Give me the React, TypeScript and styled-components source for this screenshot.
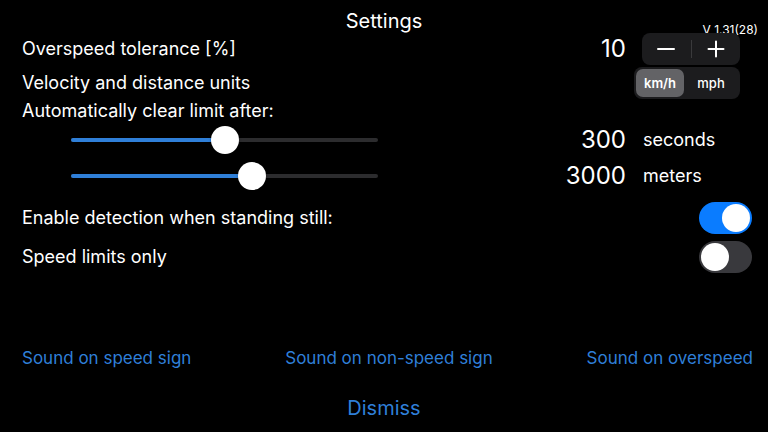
import React, { useState } from 'react';
import styled, { createGlobalStyle } from 'styled-components';

const GlobalStyle = createGlobalStyle`
  html, body {
    margin: 0;
    padding: 0;
    background: #000;
  }
  body {
    font-family: Inter, "Noto Sans", "Liberation Sans", sans-serif;
    color: #fff;
  }
`;

const BLUE = '#2f7fd8';
const SWITCH_BLUE = '#0a7cff';

function App() {
  const [tolerance, setTolerance] = useState(10);
  const [unit, setUnit] = useState('km/h');
  const [standing, setStanding] = useState(true);
  const [limitsOnly, setLimitsOnly] = useState(false);
  const seconds = 300;
  const meters = 3000;

  return (
    <>
      <GlobalStyle />
      <Screen>
        <Header>
          <span />
          <Title>Settings</Title>
          <Version>V 1.31(28)</Version>
        </Header>

        <Row $height={34}>
          <Label>Overspeed tolerance [%]</Label>
          <Controls>
            <BigValue>{tolerance}</BigValue>
            <Stepper>
              <StepButton onClick={() => setTolerance(tolerance - 1)}>
                <svg width="18" height="18" viewBox="0 0 18 18">
                  <path d="M1 9h16" stroke="#fff" strokeWidth="2" strokeLinecap="round" />
                </svg>
              </StepButton>
              <StepDivider />
              <StepButton onClick={() => setTolerance(tolerance + 1)}>
                <svg width="18" height="18" viewBox="0 0 18 18">
                  <path d="M1.5 9h15M9 1.5v15" stroke="#fff" strokeWidth="2" strokeLinecap="round" />
                </svg>
              </StepButton>
            </Stepper>
          </Controls>
        </Row>

        <Row $height={34}>
          <Label>Velocity and distance units</Label>
          <Controls>
            <Segmented>
              <Segment $active={unit === 'km/h'} $width={48} onClick={() => setUnit('km/h')}>
                km/h
              </Segment>
              <Segment $active={unit === 'mph'} $width={54} onClick={() => setUnit('mph')}>
                mph
              </Segment>
            </Segmented>
          </Controls>
        </Row>

        <Row $height={22}>
          <Label>Automatically clear limit after:</Label>
        </Row>

        <SliderRow>
          <span />
          <Slider value={0.5} />
          <span />
          <BigValue $right>{seconds}</BigValue>
          <Unit>seconds</Unit>
        </SliderRow>
        <SliderRow>
          <span />
          <Slider value={0.59} />
          <span />
          <BigValue $right>{meters}</BigValue>
          <Unit>meters</Unit>
        </SliderRow>

        <ToggleRow $first>
          <Label>Enable detection when standing still:</Label>
          <Switch $on={standing} onClick={() => setStanding(!standing)}>
            <Knob />
          </Switch>
        </ToggleRow>
        <ToggleRow>
          <Label>Speed limits only</Label>
          <Switch $on={limitsOnly} onClick={() => setLimitsOnly(!limitsOnly)}>
            <Knob />
          </Switch>
        </ToggleRow>

        <Spacer />

        <LinkRow>
          <LinkButton>Sound on speed sign</LinkButton>
          <LinkButton>Sound on non-speed sign</LinkButton>
          <LinkButton>Sound on overspeed</LinkButton>
        </LinkRow>
        <DismissRow>
          <Dismiss>Dismiss</Dismiss>
        </DismissRow>
      </Screen>
    </>
  );
}

function Slider({ value }: { value: number }) {
  return (
    <Track>
      <Fill style={{ width: `${value * 100}%` }} />
      <Thumb style={{ left: `${value * 100}%` }} />
    </Track>
  );
}

const Screen = styled.div`
  width: 768px;
  height: 432px;
  display: flex;
  flex-direction: column;
  background: #000;
  overflow: hidden;
`;
const Header = styled.div`
  display: grid;
  grid-template-columns: 1fr auto 1fr;
  height: 32px;
  padding-top: 9px;
  box-sizing: border-box;
`;
const Title = styled.div`
  font-size: 20px;
  line-height: 24px;
`;
const Version = styled.div`
  justify-self: end;
  align-self: end;
  margin-right: 10px;
  margin-bottom: -4px;
  font-size: 12px;
  line-height: 14px;
`;
const Row = styled.div<{ $height: number }>`
  display: flex;
  align-items: center;
  height: ${(p) => p.$height}px;
  padding: 0 28px 0 22px;
`;
const Label = styled.div`
  font-size: 18px;
  line-height: 22px;
  flex: 1;
`;
const Controls = styled.div`
  display: flex;
  align-items: center;
`;
const BigValue = styled.div<{ $right?: boolean }>`
  font-size: 24px;
  line-height: 28px;
  margin-right: ${(p) => (p.$right ? 17 : 16)}px;
  text-align: right;
`;
const Stepper = styled.div`
  display: flex;
  align-items: center;
  width: 98px;
  height: 32px;
  border-radius: 8px;
  background: #1c1c1e;
`;
const StepButton = styled.button`
  flex: 1;
  height: 100%;
  display: flex;
  align-items: center;
  justify-content: center;
  background: none;
  border: none;
  padding: 0;
  cursor: pointer;
`;
const StepDivider = styled.div`
  width: 1px;
  height: 18px;
  background: #3a3a3c;
`;
const Segmented = styled.div`
  display: flex;
  margin-left: -8px;
  padding: 2px;
  border-radius: 8px;
  background: #1c1c1e;
`;
const Segment = styled.div<{ $active: boolean; $width: number }>`
  width: ${(p) => p.$width}px;
  height: 28px;
  display: flex;
  align-items: center;
  justify-content: center;
  border-radius: 7px;
  font-size: 13px;
  font-weight: ${(p) => (p.$active ? 600 : 500)};
  background: ${(p) => (p.$active ? '#636366' : 'transparent')};
  cursor: pointer;
`;
const SliderRow = styled.div`
  display: grid;
  grid-template-columns: 49px 307px 1fr 92px 109px;
  align-items: center;
  height: 36px;
  padding: 0 16px 0 22px;
`;
const Track = styled.div`
  position: relative;
  height: 4px;
  border-radius: 2px;
  background: #2c2c2e;
`;
const Fill = styled.div`
  height: 100%;
  border-radius: 2px;
  background: ${BLUE};
`;
const Thumb = styled.div`
  position: absolute;
  top: 50%;
  width: 28px;
  height: 28px;
  margin: -14px 0 0 -14px;
  border-radius: 50%;
  background: #fff;
  box-shadow: 0 1px 3px rgba(0, 0, 0, 0.3);
`;
const Unit = styled.div`
  font-size: 18px;
  line-height: 22px;
`;
const ToggleRow = styled.div<{ $first?: boolean }>`
  display: flex;
  align-items: center;
  height: 39px;
  margin-top: ${(p) => (p.$first ? 4 : 0)}px;
  padding: 0 16px 0 22px;
`;
const Switch = styled.div<{ $on: boolean }>`
  width: 53px;
  height: 32px;
  box-sizing: border-box;
  padding: 2px;
  border-radius: 16px;
  background: ${(p) => (p.$on ? SWITCH_BLUE : '#39393d')};
  display: flex;
  justify-content: ${(p) => (p.$on ? 'flex-end' : 'flex-start')};
  cursor: pointer;
`;
const Knob = styled.div`
  width: 28px;
  height: 28px;
  border-radius: 50%;
  background: #fff;
`;
const Spacer = styled.div`
  flex: 1;
`;
const LinkRow = styled.div`
  display: flex;
  justify-content: space-between;
  height: 24px;
  padding: 0 15px 0 22px;
`;
const LinkButton = styled.div`
  font-size: 17px;
  line-height: 24px;
  color: ${BLUE};
  cursor: pointer;
`;
const DismissRow = styled.div`
  display: flex;
  justify-content: center;
  margin-top: 26px;
  margin-bottom: 12px;
`;
const Dismiss = styled.div`
  font-size: 20px;
  line-height: 24px;
  color: ${BLUE};
  cursor: pointer;
`;

export default App;
